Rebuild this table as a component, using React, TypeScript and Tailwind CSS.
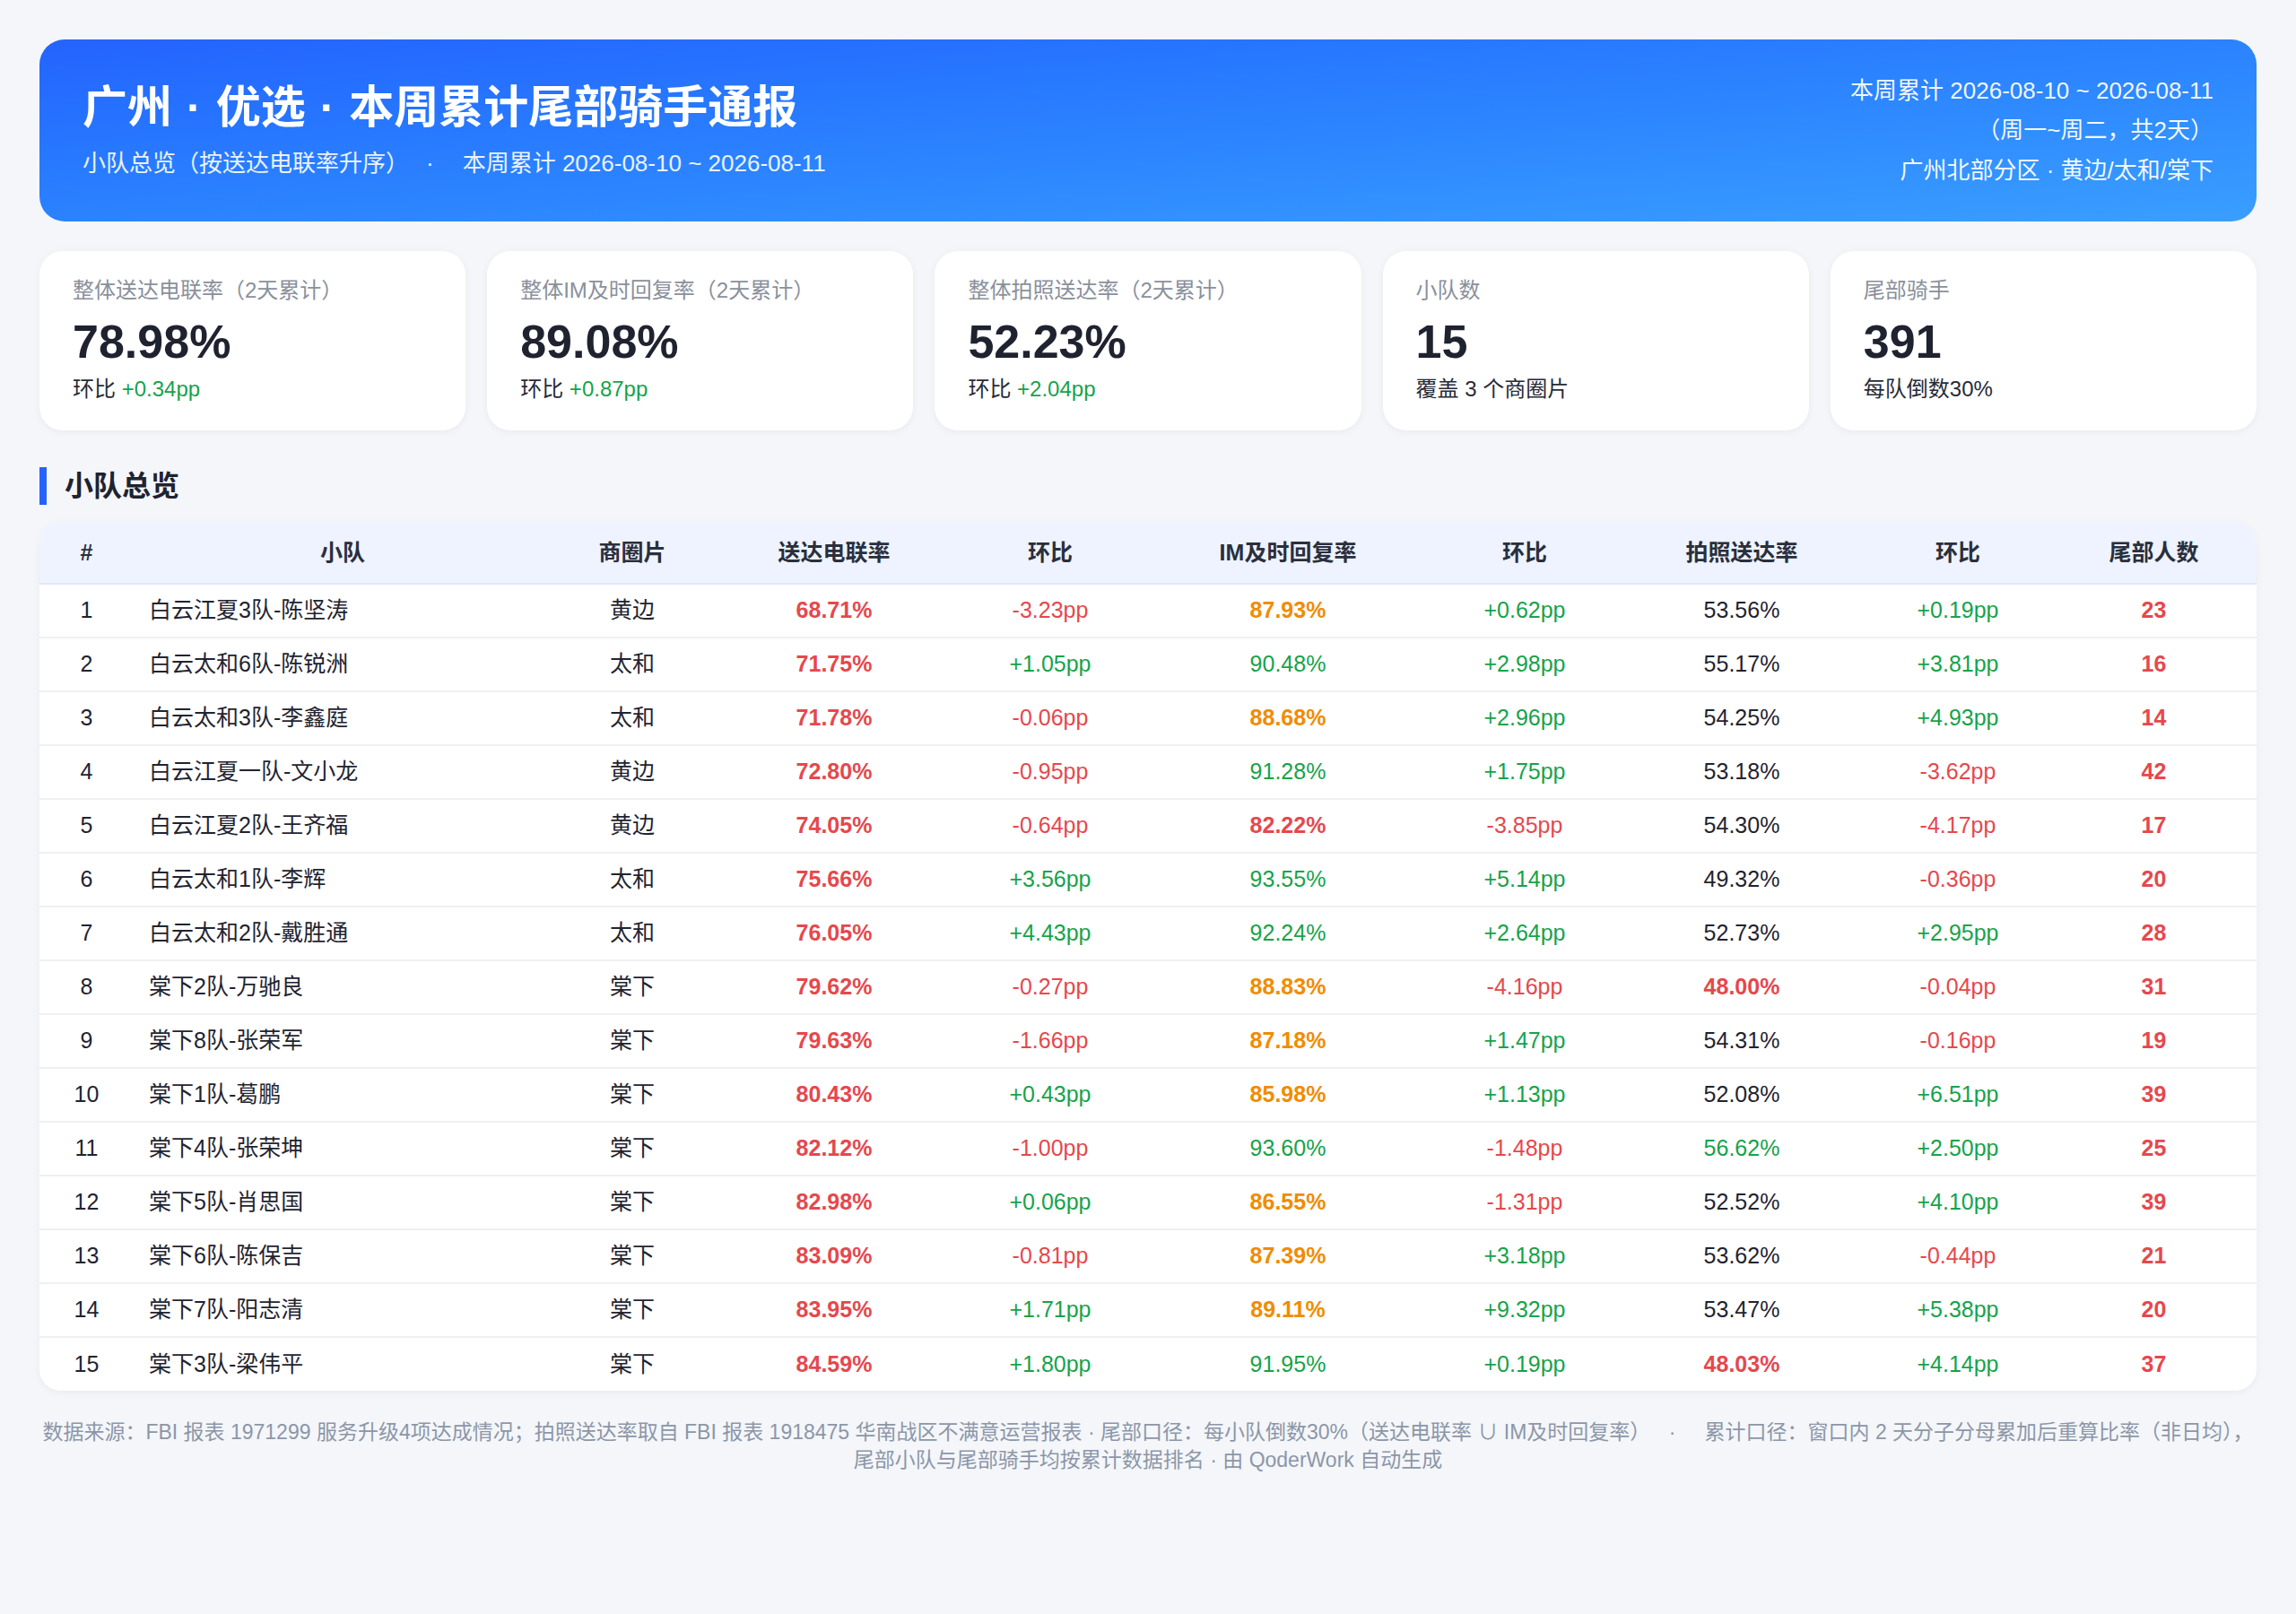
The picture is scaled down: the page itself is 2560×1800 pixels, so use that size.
import React from "react"

type Tone = "r" | "o" | "g" | "n"

const toneCls: Record<Tone, string> = {
  r: "font-bold text-[#e5484d]",
  o: "font-bold text-[#f08c00]",
  g: "text-[#16a34a]",
  n: "text-[#1f2430]",
}

const kpis = [
  { label: "整体送达电联率（2天累计）", value: "78.98%", prefix: "环比", delta: "+0.34pp" },
  { label: "整体IM及时回复率（2天累计）", value: "89.08%", prefix: "环比", delta: "+0.87pp" },
  { label: "整体拍照送达率（2天累计）", value: "52.23%", prefix: "环比", delta: "+2.04pp" },
  { label: "小队数", value: "15", prefix: "覆盖 3 个商圈片", delta: "" },
  { label: "尾部骑手", value: "391", prefix: "每队倒数30%", delta: "" },
]

// rank, team, area, 送达电联率, 环比, IM, tone, 环比, 拍照, tone, 环比, 尾部人数
type Row = [number, string, string, string, string, string, Tone, string, string, Tone, string, number]

const rows: Row[] = [
  [1, "白云江夏3队-陈坚涛", "黄边", "68.71%", "-3.23pp", "87.93%", "o", "+0.62pp", "53.56%", "n", "+0.19pp", 23],
  [2, "白云太和6队-陈锐洲", "太和", "71.75%", "+1.05pp", "90.48%", "g", "+2.98pp", "55.17%", "n", "+3.81pp", 16],
  [3, "白云太和3队-李鑫庭", "太和", "71.78%", "-0.06pp", "88.68%", "o", "+2.96pp", "54.25%", "n", "+4.93pp", 14],
  [4, "白云江夏一队-文小龙", "黄边", "72.80%", "-0.95pp", "91.28%", "g", "+1.75pp", "53.18%", "n", "-3.62pp", 42],
  [5, "白云江夏2队-王齐福", "黄边", "74.05%", "-0.64pp", "82.22%", "r", "-3.85pp", "54.30%", "n", "-4.17pp", 17],
  [6, "白云太和1队-李辉", "太和", "75.66%", "+3.56pp", "93.55%", "g", "+5.14pp", "49.32%", "n", "-0.36pp", 20],
  [7, "白云太和2队-戴胜通", "太和", "76.05%", "+4.43pp", "92.24%", "g", "+2.64pp", "52.73%", "n", "+2.95pp", 28],
  [8, "棠下2队-万驰良", "棠下", "79.62%", "-0.27pp", "88.83%", "o", "-4.16pp", "48.00%", "r", "-0.04pp", 31],
  [9, "棠下8队-张荣军", "棠下", "79.63%", "-1.66pp", "87.18%", "o", "+1.47pp", "54.31%", "n", "-0.16pp", 19],
  [10, "棠下1队-葛鹏", "棠下", "80.43%", "+0.43pp", "85.98%", "o", "+1.13pp", "52.08%", "n", "+6.51pp", 39],
  [11, "棠下4队-张荣坤", "棠下", "82.12%", "-1.00pp", "93.60%", "g", "-1.48pp", "56.62%", "g", "+2.50pp", 25],
  [12, "棠下5队-肖思国", "棠下", "82.98%", "+0.06pp", "86.55%", "o", "-1.31pp", "52.52%", "n", "+4.10pp", 39],
  [13, "棠下6队-陈保吉", "棠下", "83.09%", "-0.81pp", "87.39%", "o", "+3.18pp", "53.62%", "n", "-0.44pp", 21],
  [14, "棠下7队-阳志清", "棠下", "83.95%", "+1.71pp", "89.11%", "o", "+9.32pp", "53.47%", "n", "+5.38pp", 20],
  [15, "棠下3队-梁伟平", "棠下", "84.59%", "+1.80pp", "91.95%", "g", "+0.19pp", "48.03%", "r", "+4.14pp", 37],
]

const heads = ["#", "小队", "商圈片", "送达电联率", "环比", "IM及时回复率", "环比", "拍照送达率", "环比", "尾部人数"]

function Delta({ v }: { v: string }) {
  return <span className={v.startsWith("-") ? "text-[#e5484d]" : "text-[#16a34a]"}>{v}</span>
}

export default function App() {
  return (
    <div className="min-h-screen bg-[#f4f6fa] px-[44px] pt-[44px] pb-[60px] font-['Liberation_Sans','Noto_Sans_CJK_SC',sans-serif] text-[#1f2430]">

      {/* Banner */}
      <header className="flex h-[203px] items-center justify-between rounded-[28px] bg-linear-to-br from-[#2463ff] to-[#3a9eff] px-[48px] text-white">
        <div>
          <h1 className="text-[50px] font-bold leading-[60px]">
            广州<span className="mx-[16px]">·</span>优选<span className="mx-[16px]">·</span>本周累计尾部骑手通报
          </h1>
          <p className="mt-[13px] text-[26px] leading-[39px] text-white/90">
            小队总览（按送达电联率升序）<span className="mx-[32px]">·</span>本周累计 2026-08-10 ~ 2026-08-11
          </p>
        </div>
        <div className="text-right text-[26px] leading-[44.5px] text-white/95">
          <div>本周累计 2026-08-10 ~ 2026-08-11</div>
          <div>（周一~周二，共2天）</div>
          <div>广州北部分区 · 黄边/太和/棠下</div>
        </div>
      </header>

      {/* KPI cards */}
      <div className="mt-[33px] grid grid-cols-5 gap-6">
        {kpis.map((k) => (
          <div key={k.label} className="h-[200px] rounded-[26px] bg-white px-[37px] pt-[26px] shadow-[0_2px_10px_rgba(15,23,42,0.05)]">
            <div className="text-[24px] leading-[36px] text-[#8a909c]">{k.label}</div>
            <div className="mt-[9px] text-[52px] font-bold leading-[60px] text-[#1f2330]">{k.value}</div>
            <div className="mt-[5px] text-[24px] leading-[36px] text-[#262b36]">
              {k.prefix}
              {k.delta && <span className="text-[#16a34a]"> {k.delta}</span>}
            </div>
          </div>
        ))}
      </div>

      {/* Section title */}
      <h2 className="mt-[41px] flex h-[42px] items-center border-l-[8px] border-[#2563ff] pl-[20px] text-[32px] font-bold text-[#1f2330]">
        小队总览
      </h2>

      {/* Team table */}
      <div className="mt-[20px] overflow-hidden rounded-[24px] bg-white shadow-[0_2px_10px_rgba(15,23,42,0.05)]">
        <table className="w-full table-fixed border-collapse text-[25px]">
          <colgroup>
            <col className="w-[105px]" />
            <col className="w-[466px]" />
            <col className="w-[180px]" />
            <col className="w-[270px]" />
            <col className="w-[212px]" />
            <col className="w-[318px]" />
            <col className="w-[210px]" />
            <col className="w-[274px]" />
            <col className="w-[208px]" />
            <col className="w-[229px]" />
          </colgroup>
          <thead>
            <tr className="border-b-2 border-[#dfe7f7] bg-[#eef3ff]">
              {heads.map((h, i) => (
                <th key={i} className="h-[68px] text-center font-bold text-[#2a2f3d]">{h}</th>
              ))}
            </tr>
          </thead>
          <tbody>
            {rows.map((r) => (
              <tr key={r[0]} className="border-b-2 border-[#eff0f5] last:border-b-0">
                <td className="h-[60px] text-center">{r[0]}</td>
                <td className="pl-[17px] text-left">{r[1]}</td>
                <td className="text-center">{r[2]}</td>
                <td className="text-center font-bold text-[#e5484d]">{r[3]}</td>
                <td className="text-center"><Delta v={r[4]} /></td>
                <td className={"text-center " + toneCls[r[6]]}>{r[5]}</td>
                <td className="text-center"><Delta v={r[7]} /></td>
                <td className={"text-center " + toneCls[r[9]]}>{r[8]}</td>
                <td className="text-center"><Delta v={r[10]} /></td>
                <td className="text-center font-bold text-[#e5484d]">{r[11]}</td>
              </tr>
            ))}
          </tbody>
        </table>
      </div>

      {/* Footnote */}
      <p className="mt-[31px] text-center text-[23px] leading-[31px] text-[#8c96a8]">
        数据来源：FBI 报表 1971299 服务升级4项达成情况；拍照送达率取自 FBI 报表 1918475 华南战区不满意运营报表 · 尾部口径：每小队倒数30%（送达电联率 ∪ IM及时回复率）<span className="mx-[32px]">·</span>累计口径：窗口内 2 天分子分母累加后重算比率（非日均）， 尾部小队与尾部骑手均按累计数据排名 · 由 QoderWork 自动生成
      </p>
    </div>
  )
}
